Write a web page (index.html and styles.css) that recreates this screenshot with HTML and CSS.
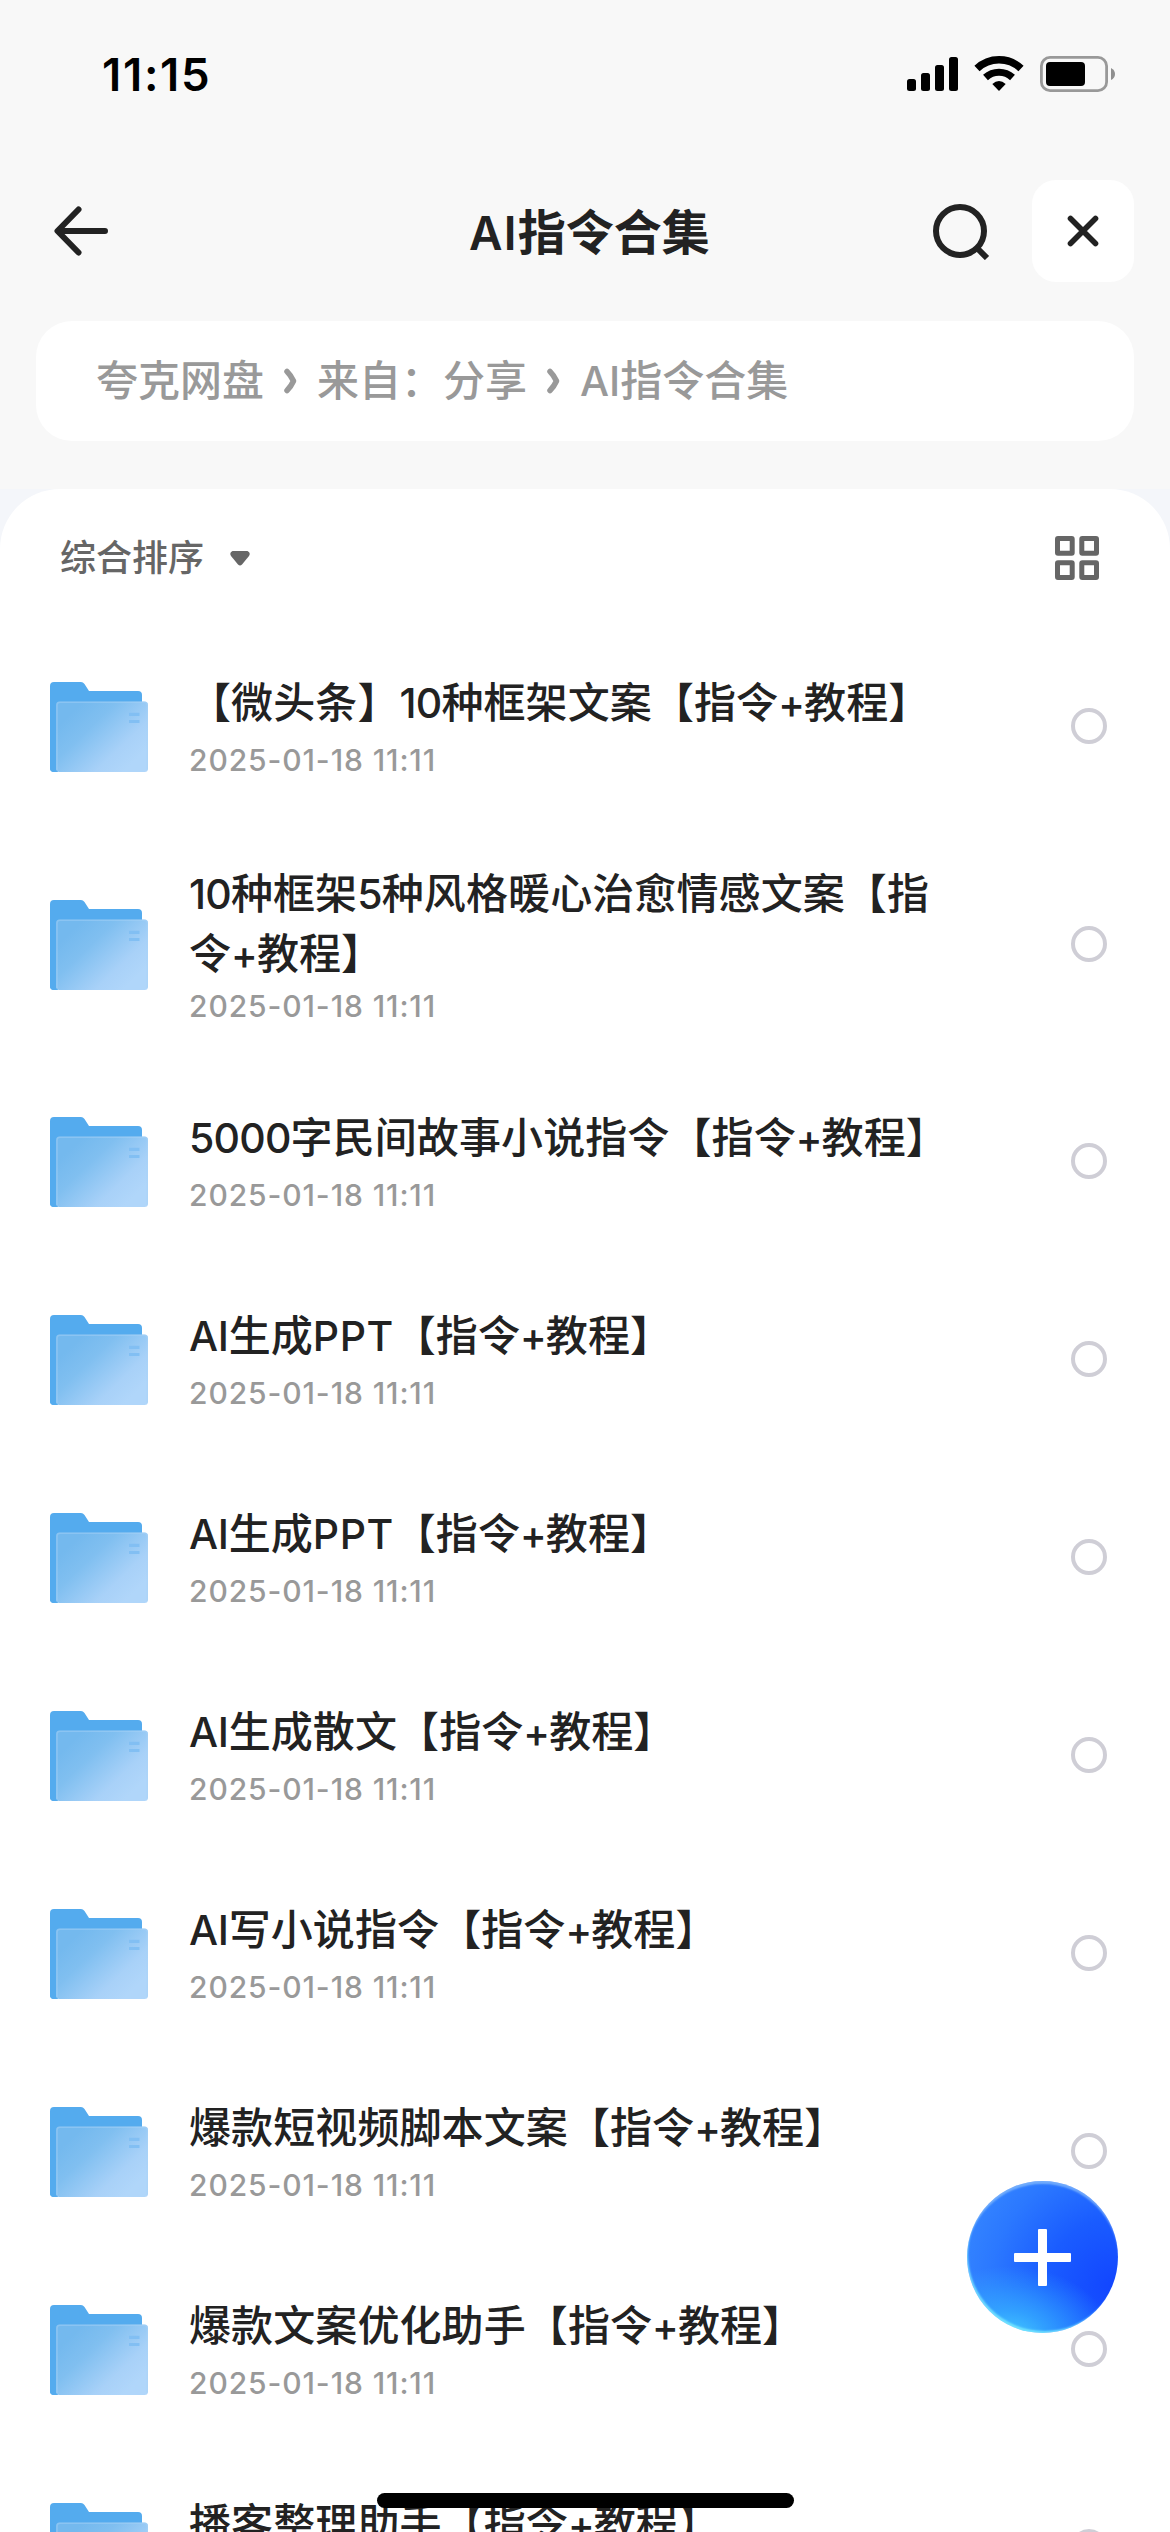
FILE: index.html
```
<!DOCTYPE html>
<html lang="zh-CN">
<head>
<meta charset="utf-8">
<title>AI指令合集</title>
<link rel="stylesheet" href="styles.css">
</head>
<body>
<svg width="0" height="0" class="defs">
  <defs>
    <linearGradient id="front" x1="0.1" y1="0.25" x2="0.85" y2="0.85">
      <stop offset="0" stop-color="#74b9ee"/>
      <stop offset="0.3" stop-color="#80bff0"/>
      <stop offset="0.75" stop-color="#a8d1f8"/>
      <stop offset="1" stop-color="#b0d6fa"/>
    </linearGradient>
    <symbol id="folder" viewBox="0 0 98 90">
      <path d="M4 0H31Q33 0 34.500 2L39 9H88Q92 9 92 13V60H6V90H4Q0 90 0 86V4Q0 0 4 0Z" fill="#54abee"/>
      <path d="M0 60H8V90H4Q0 90 0 86Z" fill="#54abee"/>
      <rect x="6" y="19.500" width="92" height="70.500" rx="3.500" fill="url(#front)"/>
      <path d="M7 88V23Q7 20.300 10 20.300H94Q97.300 20.300 97.300 23V88" fill="none" stroke="#a9d3f6" stroke-width="1.500" opacity=".45"/>
      <path d="M79 32.300H89.500M79 39.500H89.500" stroke="#82bff3" stroke-width="3.200"/>
    </symbol>
  </defs>
</svg>
<main class="screen">
  <div class="status">
    <span class="time">11:15</span>
    <svg class="signals" width="210" height="40" viewBox="906 54 210 40">
      <rect x="907" y="79" width="9" height="12" rx="2.500"/>
      <rect x="921" y="73" width="9" height="18" rx="2.500"/>
      <rect x="935" y="65" width="9" height="26" rx="2.500"/>
      <rect x="949" y="57" width="9" height="34" rx="2.500"/>
      <path d="M977 68.500A32 32 0 0 1 1021 68.500" fill="none" stroke="#000" stroke-width="7.500"/>
      <path d="M985.500 77.500A20 20 0 0 1 1012.500 77.500" fill="none" stroke="#000" stroke-width="7.200"/>
      <path d="M992.300 84Q999 77.800 1005.700 84L999 91Z"/>
      <rect x="1041.400" y="57.400" width="65.200" height="33.200" rx="8.600" fill="none" stroke="#999" stroke-width="2.800"/>
      <rect x="1046" y="62" width="39" height="24" rx="4"/>
      <path d="M1111 68Q1115 70 1115 74T1111 80Z" fill="#8f8f8f"/>
    </svg>
  </div>
  <header class="nav">
    <svg class="back" width="54" height="50" viewBox="0 0 54 50"><path d="M24.500 3.500L3.500 25L24.500 46.500M4 25H51" fill="none" stroke="#222" stroke-width="6" stroke-linecap="round" stroke-linejoin="round"/></svg>
    <h1><span>AI</span>指令合集</h1>
    <svg class="search" width="58" height="58" viewBox="0 0 58 58" fill="none" stroke="#222" stroke-width="6"><circle cx="27" cy="29" r="24"/><path d="M43 45L54 56"/></svg>
    <button class="close"><svg width="32" height="32" viewBox="0 0 32 32"><path d="M3.500 3.500L28.500 28.500M28.500 3.500L3.500 28.500" stroke="#222" stroke-width="5.600" stroke-linecap="round"/></svg></button>
  </header>
  <nav class="crumbs">
    <span>夸克网盘</span>
    <svg width="13" height="26" viewBox="0 0 13 26"><path d="M3 3.500Q7 7.500 9.500 13Q7 18.500 3 22.500" /></svg>
    <span>来自：分享</span>
    <svg width="13" height="26" viewBox="0 0 13 26"><path d="M3 3.500Q7 7.500 9.500 13Q7 18.500 3 22.500" /></svg>
    <span><i>AI</i>指令合集</span>
  </nav>
  <section class="panel">
    <div class="sheet">
      <div class="sort">
        <span>综合排序</span>
        <svg width="20" height="15" viewBox="0 0 20 15"><path d="M2.500 0H17.500Q21 1.500 19 5L12 13.500Q10 15.500 8 13.500L1 5Q-1 1.500 2.500 0Z" fill="#666"/></svg>
        <svg class="grid" width="44" height="44" viewBox="0 0 44 44" fill="none" stroke="#666" stroke-width="5"><rect x="2.500" y="2.500" width="14.700" height="14.700" rx=".5"/><rect x="26.800" y="2.500" width="14.700" height="14.700" rx=".5"/><rect x="2.500" y="26.800" width="14.700" height="14.700" rx=".5"/><rect x="26.800" y="26.800" width="14.700" height="14.700" rx=".5"/></svg>
      </div>
      <ul class="files">
        <li><svg class="folder"><use href="#folder"/></svg><div class="info"><h2>【微头条】<i>10</i>种框架文案【指令<i class="plus">+</i>教程】</h2><time>2025-01-18 11:11</time></div><b></b></li>
        <li class="tall"><svg class="folder"><use href="#folder"/></svg><div class="info"><h2><i>10</i>种框架<i>5</i>种风格暖心治愈情感文案【指令<i class="plus">+</i>教程】</h2><time>2025-01-18 11:11</time></div><b></b></li>
        <li><svg class="folder"><use href="#folder"/></svg><div class="info"><h2><i>5000</i>字民间故事小说指令【指令<i class="plus">+</i>教程】</h2><time>2025-01-18 11:11</time></div><b></b></li>
        <li><svg class="folder"><use href="#folder"/></svg><div class="info"><h2><i class="ai">AI</i>生成<i class="ppt">PPT</i>【指令<i class="plus">+</i>教程】</h2><time>2025-01-18 11:11</time></div><b></b></li>
        <li><svg class="folder"><use href="#folder"/></svg><div class="info"><h2><i class="ai">AI</i>生成<i class="ppt">PPT</i>【指令<i class="plus">+</i>教程】</h2><time>2025-01-18 11:11</time></div><b></b></li>
        <li><svg class="folder"><use href="#folder"/></svg><div class="info"><h2><i class="ai">AI</i>生成散文【指令<i class="plus">+</i>教程】</h2><time>2025-01-18 11:11</time></div><b></b></li>
        <li><svg class="folder"><use href="#folder"/></svg><div class="info"><h2><i class="ai">AI</i>写小说指令【指令<i class="plus">+</i>教程】</h2><time>2025-01-18 11:11</time></div><b></b></li>
        <li><svg class="folder"><use href="#folder"/></svg><div class="info"><h2>爆款短视频脚本文案【指令<i class="plus">+</i>教程】</h2><time>2025-01-18 11:11</time></div><b></b></li>
        <li><svg class="folder"><use href="#folder"/></svg><div class="info"><h2>爆款文案优化助手【指令<i class="plus">+</i>教程】</h2><time>2025-01-18 11:11</time></div><b></b></li>
        <li><svg class="folder"><use href="#folder"/></svg><div class="info"><h2>播客整理助手【指令<i class="plus">+</i>教程】</h2><time>2025-01-18 11:11</time></div><b></b></li>
      </ul>
    </div>
  </section>
  <button class="fab"><svg width="57" height="57" viewBox="0 0 57 57"><path d="M24 1Q24 0 25 0H32Q33 0 33 1V24H56Q57 24 57 25V32Q57 33 56 33H33V56Q33 57 32 57H25Q24 57 24 56V33H1Q0 33 0 32V25Q0 24 1 24H24Z" fill="#fff"/></svg></button>
  <div class="home"></div>
</main>
</body>
</html>
```

FILE: styles.css
```
* { box-sizing: border-box; }
body { margin: 0; font-family: Inter, "Noto Sans CJK SC", sans-serif; text-spacing-trim: space-all; }
h1, h2, ul { margin: 0; padding: 0; }
i { font-style: normal; }
button { border: 0; padding: 0; display: flex; align-items: center; justify-content: center; }
svg { display: block; flex: none; }
.defs { position: absolute; }
.screen { position: relative; width: 1170px; height: 2532px; overflow: hidden; background: #f8f8f8; display: flex; flex-direction: column; }

.status { height: 180px; padding: 54px 54px 0 102px; display: flex; justify-content: space-between; align-items: flex-start; }
.time { font-size: 45.500px; line-height: 42px; font-weight: 600; color: #000; letter-spacing: 1.700px; }

.nav { height: 102px; padding: 0 36px 0 54px; display: flex; align-items: center; flex: none; }
.nav h1 { margin-left: 361px; padding-top: 3px; width: 250px; font-size: 48px; line-height: 60px; font-weight: 700; color: #222; white-space: nowrap; }
.nav h1 span { font-size: 46px; font-weight: 600; letter-spacing: 1.300px; }
.search { margin-left: 214px; }
.close { margin-left: auto; width: 102px; height: 102px; border-radius: 24px; background: #fff; }

.crumbs { margin: 39px 36px 48px; height: 120px; flex: none; border-radius: 36px; background: #fff; padding-left: 60px; display: flex; align-items: center; gap: 20px; font-size: 42px; line-height: 60px; font-weight: 500; color: #999; white-space: nowrap; }
.crumbs svg { fill: none; stroke: #999; stroke-width: 5.500px; stroke-linecap: round; stroke-linejoin: round; }
.crumbs i { font-size: 41px; }

.panel { flex: 1; background: #f4f6fa; min-height: 0; }
.sheet { background: #fff; border-radius: 60px 60px 0 0; height: 100%; }
.sort { height: 138px; padding: 0 71px 0 60px; display: flex; align-items: center; font-size: 36px; font-weight: 500; color: #666; gap: 26px; }
.sort span { padding-bottom: 6px; }
.grid { margin-left: auto; }

.files { list-style: none; }
.files li { height: 198px; padding: 0 63px 0 50px; display: flex; align-items: center; }
.files li.tall { height: 237px; }
.folder { width: 98px; height: 90px; margin-top: 2px; }
.info { width: 775px; margin-left: 41px; padding-bottom: 2px; display: flex; flex-direction: column; gap: 9px; }
.tall .info { gap: 4px; padding-bottom: 0; }
.info h2 { font-size: 42px; line-height: 60px; font-weight: 500; letter-spacing: 0.1px; color: #222; }
.info i { font-size: 41px; line-height: 1; letter-spacing: -0.8px; }
.info .ai { letter-spacing: -0.3px; }
.info .ppt { letter-spacing: 0.5px; }
.info .plus { font-size: 40px; letter-spacing: -0.900px; }
.info time { font-size: 30px; line-height: 36px; font-weight: 500; letter-spacing: 0.9px; color: #999; }
.files b { margin-left: auto; width: 36px; height: 36px; border-radius: 50%; border: 4px solid #cfced6; }

.fab { position: absolute; left: 967px; top: 2181px; width: 151px; height: 152px; border-radius: 50%;
  background: radial-gradient(68% 48% at 28% 104%, #45ccff 0, rgba(54,178,255,.75) 38%, rgba(40,130,255,0) 100%), radial-gradient(circle at 98% 70%, #1245ff 0, #1a5cff 38%, #2b78ff 68%, #3a8cff 100%);
  box-shadow: inset 0 4px 2px -1px rgba(150,200,250,.65), inset 2px -3px 2px -1px rgba(130,240,255,.75); }
.home { position: absolute; left: 377px; top: 2493px; width: 417px; height: 15px; border-radius: 8px; background: #000; }
```
